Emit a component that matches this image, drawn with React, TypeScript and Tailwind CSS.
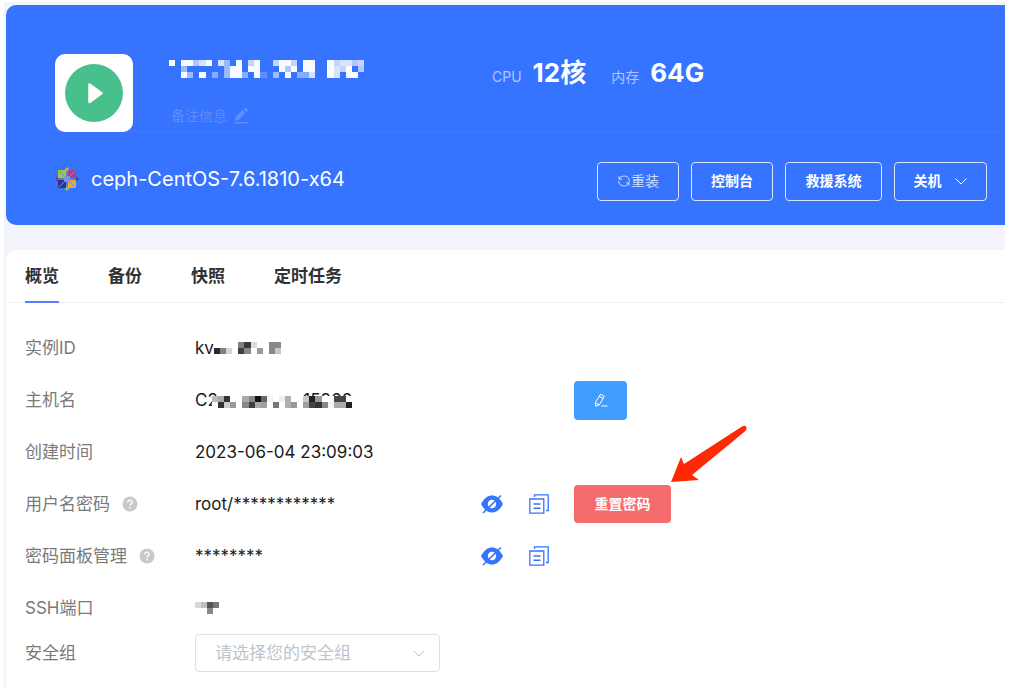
import React, { useState } from "react";

const TABS = ["概览", "备份", "快照", "定时任务"];

type Cell = [number, number, string];

const TITLE_ROWS = [
  "9.99689.85.9.79..7997.99..978867",
  "..5......599.99...969.99..9879.6",
  "..95.9.4.5994.92.5.9.448..98.99.",
];

const TITLE_CELLS: Cell[] = TITLE_ROWS.flatMap((row, y) =>
  row.split("").flatMap((c, x): Cell[] => {
    if (c === ".") return [];
    return [[x, y, `rgba(255,255,255,${c === "9" ? 0.97 : Number(c) / 10})`]];
  })
);

const ID_CELLS: Cell[] = [
  [4, 0, "#808080"], [5, 0, "#3a3a3a"], [6, 0, "#ddd"], [9, 0, "#888"], [10, 0, "#888"],
  [0, 1, "#2a2a2a"], [1, 1, "#808080"], [2, 1, "#d5d5d5"], [4, 1, "#3f3f3f"], [5, 1, "#888"],
  [7, 1, "#999"], [9, 1, "#888"], [10, 1, "#c8c8c8"],
];

const HOST_CELLS: Cell[] = [
  [0, 0, "#bbb"], [1, 0, "#aaa"], [2, 0, "#333"], [5, 0, "#aaa"], [6, 0, "#888"], [7, 0, "#111"],
  [8, 0, "#666"], [9, 0, "#f5f5f5"], [11, 0, "#eee"], [12, 0, "#b0b0b0"], [15, 0, "#c8c8c8"],
  [16, 0, "#222"], [17, 0, "#999"], [20, 0, "#444"], [21, 0, "#444"], [1, 1, "#333"], [2, 1, "#ccc"],
  [3, 1, "#999"], [5, 1, "#888"], [6, 1, "#3f3f3f"], [7, 1, "#aaa"], [8, 1, "#a0a0a0"], [10, 1, "#777"],
  [12, 1, "#b0b0b0"], [13, 1, "#999"], [15, 1, "#a0a0a0"], [16, 1, "#444"], [17, 1, "#333"],
  [18, 1, "#888"], [19, 1, "#f5f5f5"], [20, 1, "#aaa"], [21, 1, "#aaa"], [22, 1, "#222"],
];

const PORT_CELLS: Cell[] = [
  [0, 0, "#d8d8d8"], [1, 0, "#c0c0c0"], [2, 0, "#555"], [3, 0, "#777"], [2, 1, "#888"],
];

// Masked value, drawn as a grid of blocks
const Mosaic: React.FC<{ cells: Cell[]; cols: number; rows: number; className: string }> = ({
  cells,
  cols,
  rows,
  className,
}) => (
  <svg
    viewBox={`0 0 ${cols} ${rows}`}
    preserveAspectRatio="none"
    shapeRendering="crispEdges"
    className={className}
    aria-hidden="true"
  >
    {cells.map(([x, y, fill]) => (
      <rect key={`${x}-${y}`} x={x} y={y} width="1" height="1" fill={fill} />
    ))}
  </svg>
);

const CentosLogo = () => (
  <svg viewBox="0 0 24 24" className="size-6" aria-hidden="true">
    <path d="M12 0l4 4.500h-8z" fill="#efa724" />
    <path d="M24 12l-4.500 4v-8z" fill="#3a3a8c" />
    <path d="M12 24l-4-4.500h8z" fill="#9ccd2a" />
    <path d="M0 12l4.500-4v8z" fill="#932279" />
    <path d="M3 3h8v8h-8z" fill="#9cc83a" />
    <path d="M13 3h8v8h-8z" fill="#a5408f" />
    <path d="M3 13h8v8h-8z" fill="#2d3490" />
    <path d="M13 13h8v8h-8z" fill="#e6a83a" />
    <path d="M12 2v20M2 12h20M4 4l16 16M20 4L4 20" stroke="#6f8fe0" strokeWidth="1" />
    <path d="M9 9h6v6h-6z" fill="#7f93d8" />
  </svg>
);

const EyeOffIcon = () => (
  <svg viewBox="0 0 22 20" className="h-5 w-[22px]" fill="none" aria-hidden="true">
    <path d="M0 10C3 4 7 1.500 11 1.500S19 4 22 10c-3 6-7 8.500-11 8.500S3 16 0 10z" fill="#3673ff" />
    <circle cx="11" cy="10" r="4.200" fill="#fff" />
    <path d="M2 19L20 1.500" stroke="#3673ff" strokeWidth="1.600" />
  </svg>
);

const CopyIcon = () => (
  <svg viewBox="0 0 20 20" className="size-5" fill="none" stroke="#3673ff" strokeWidth="1.300" aria-hidden="true">
    <path d="M.8 5h14v14.200H.8z" />
    <path d="M5.500 3V.8h13.700v15.700H17" />
    <path d="M4.500 10h7M4.500 14.200h7" strokeWidth="1.500" />
  </svg>
);

const HelpIcon = () => (
  <svg viewBox="0 0 16 16" className="size-4" aria-hidden="true">
    <circle cx="8" cy="8" r="7.500" fill="#c8c8c8" />
    <path d="M5.800 6.400c0-3 4.500-2.900 4.500-.2 0 1.600-2.200 1.700-2.200 3.300" fill="none" stroke="#fff" strokeWidth="1.400" />
    <circle cx="8.100" cy="11.700" r=".9" fill="#fff" />
  </svg>
);

const ChevronDown: React.FC<{ className: string }> = ({ className }) => (
  <svg viewBox="0 0 14 14" className={className} fill="none" stroke="currentColor" aria-hidden="true">
    <path d="M1.500 4.500L7 10l5.500-5.500" />
  </svg>
);

const Row: React.FC<{
  label: string;
  help?: boolean;
  value: React.ReactNode;
  secret?: boolean;
  children?: React.ReactNode;
}> = ({ label, help, value, secret, children }) => (
  <div className="grid h-[52px] grid-cols-[170px_286px_93px_auto] items-center">
    <div className="flex items-center gap-3 text-[#7a7a7a]">
      {label}
      {help && <HelpIcon />}
    </div>
    <div className="flex items-center">{value}</div>
    <div className="flex items-center gap-[26px]">
      {secret && (
        <>
          <button type="button" aria-label="显示">
            <EyeOffIcon />
          </button>
          <button type="button" aria-label="复制">
            <CopyIcon />
          </button>
        </>
      )}
    </div>
    <div className="flex items-center">{children}</div>
  </div>
);

const actionClass =
  "flex h-[39px] items-center justify-center rounded border border-white/80 pb-px text-sm font-bold";

const App: React.FC = () => {
  const [tab, setTab] = useState("概览");
  const [group, setGroup] = useState("");

  return (
    <div className="bg-white pt-[2px] pr-[6px] pb-[5px] pl-1 font-['Inter','Noto_Sans_CJK_SC',sans-serif] text-[17px] leading-6 text-[#1a1a1a]">
      <div className="bg-[#f2f3fc] pt-[3px] pl-[2px]">
        <header className="rounded-l-[10px] bg-[#3673ff] pt-[49px] pb-6 pl-[49px] text-white">
          <div className="mr-[6px] flex h-[78px] border-b border-white/5">
            <div className="flex size-[78px] shrink-0 items-center justify-center rounded-[10px] bg-white">
              <svg viewBox="0 0 58 58" className="size-[58px]" role="img" aria-label="运行中">
                <circle cx="29" cy="29" r="29" fill="#48c08b" />
                <path d="M24.500 20.500v17.500L36.500 29.300z" fill="#fff" stroke="#fff" strokeWidth="2.500" strokeLinejoin="round" />
              </svg>
            </div>
            <div className="ml-9 w-[323px] pt-[6px]">
              <Mosaic cells={TITLE_CELLS} cols={32} rows={3} className="h-[18px] w-[195px]" />
              <button type="button" className="mt-7 ml-[2px] flex items-center gap-[6px] text-sm text-white/20">
                备注信息
                <svg viewBox="0 0 16 16" className="size-4" fill="currentColor" aria-hidden="true">
                  <path d="M1 14h14v1.600H1zM2 9.500L9.500 2l3 3L5 12.500H2zM10.500 1.300l1.500-1.100q.8-.4 1.500.3l1 1q.7.8.1 1.500l-1.200 1.200z" />
                </svg>
              </button>
            </div>
            <div className="flex items-baseline gap-[25px] self-start pt-px">
              <p className="flex items-baseline gap-[11px]">
                <span className="text-sm text-white/60">CPU</span>
                <span className="text-[26px] leading-9 font-bold">12核</span>
              </p>
              <p className="flex items-baseline gap-[11px]">
                <span className="text-sm text-white/60">内存</span>
                <span className="text-[26px] leading-9 font-bold">64G</span>
              </p>
            </div>
          </div>
          <div className="flex items-start justify-between pt-[30px] pr-[18px]">
            <div className="flex h-[34px] items-center gap-3 text-[20px]">
              <CentosLogo />
              ceph-CentOS-7.6.1810-x64
            </div>
            <div className="flex gap-3">
              <button type="button" className={`${actionClass} w-[82px] text-white/75`}>
                <svg viewBox="0 0 14 14" className="size-[14px]" fill="none" stroke="currentColor" aria-hidden="true">
                  <path d="M2 2.200v3h3M2.200 5C3.500 2.300 6 2 7.500 2 10.500 2 12.400 4.500 12.400 7v1M12 11.800v-3H9M11.800 9C10.500 11.700 8 12 6.500 12 3.500 12 1.600 9.500 1.600 7" />
                </svg>
                <span className="font-normal">重装</span>
              </button>
              <button type="button" className={`${actionClass} w-[82px]`}>
                控制台
              </button>
              <button type="button" className={`${actionClass} w-[97px]`}>
                救援系统
              </button>
              <button type="button" className={`${actionClass} w-[93px] gap-3`}>
                关机
                <ChevronDown className="size-[14px]" />
              </button>
            </div>
          </div>
        </header>

        <main className="mt-[25px] rounded-tl-[10px] bg-white pb-4">
          <nav className="flex gap-[49px] border-b border-[#f0f0f2] pl-[19px]">
            {TABS.map((name) => (
              <button
                key={name}
                type="button"
                onClick={() => setTab(name)}
                className={`-mb-px h-[53px] border-b-2 font-bold text-[#303133] ${
                  tab === name ? "border-[#5a7bff]" : "border-transparent"
                }`}
              >
                {name}
              </button>
            ))}
          </nav>

          <section className="pt-[19px] pl-[19px]">
            <Row
              label="实例ID"
              value={
                <>
                  kv
                  <Mosaic cells={ID_CELLS} cols={11} rows={2} className="h-3 w-[67px]" />
                </>
              }
            />
            <Row
              label="主机名"
              value={
                <div className="relative flex w-[157px] justify-between">
                  <span>C2</span>
                  <span>15266</span>
                  <Mosaic
                    cells={HOST_CELLS}
                    cols={23}
                    rows={2}
                    className="absolute right-0 bottom-1 h-3 w-[140px] bg-white"
                  />
                </div>
              }
            >
              <button
                type="button"
                aria-label="修改主机名"
                className="flex h-[39px] w-[53px] items-center justify-center rounded bg-[#409eff] text-white"
              >
                <svg viewBox="0 0 14 14" className="size-[14px]" fill="none" stroke="currentColor" aria-hidden="true">
                  <path d="M6.500 1.200l3.800 2.200-5 8.500-3.600 1.300-.3-3.600zM5.300 3.300l3.800 2.200M1.500 9.700l3.600 2.200M7.500 13h6" />
                </svg>
              </button>
            </Row>
            <Row label="创建时间" value="2023-06-04 23:09:03" />
            <Row label="用户名密码" help value="root/************" secret>
              <div className="relative">
                <button type="button" className="block h-[38px] w-[97px] rounded bg-[#f56c6c] text-sm font-bold text-white">
                  重置密码
                </button>
                <svg
                  viewBox="0 0 78 60"
                  className="absolute bottom-full left-full h-[60px] w-[78px]"
                  aria-hidden="true"
                >
                  <path d="M0 57L10 32l3 7L71 1.500q3-1.500 4.300.5 1 2-1.500 4.500L21 50l7 5z" fill="#ff2a05" />
                </svg>
              </div>
            </Row>
            <Row label="密码面板管理" help value="********" secret />
            <Row
              label="SSH端口"
              value={<Mosaic cells={PORT_CELLS} cols={4} rows={2} className="h-3 w-6" />}
            />
            <div className="grid grid-cols-[170px_245px] items-center">
              <label htmlFor="group" className="text-[#7a7a7a]">
                安全组
              </label>
              <div className="relative text-[#c0c4cc]">
                <select
                  id="group"
                  value={group}
                  onChange={(e) => setGroup(e.target.value)}
                  className="block h-[38px] w-full appearance-none rounded border border-[#dcdfe6] bg-white pl-[19px] outline-none"
                >
                  <option value="">请选择您的安全组</option>
                </select>
                <ChevronDown className="pointer-events-none absolute top-3 right-[14px] size-[14px]" />
              </div>
            </div>
          </section>
        </main>
      </div>
    </div>
  );
};

export default App;
